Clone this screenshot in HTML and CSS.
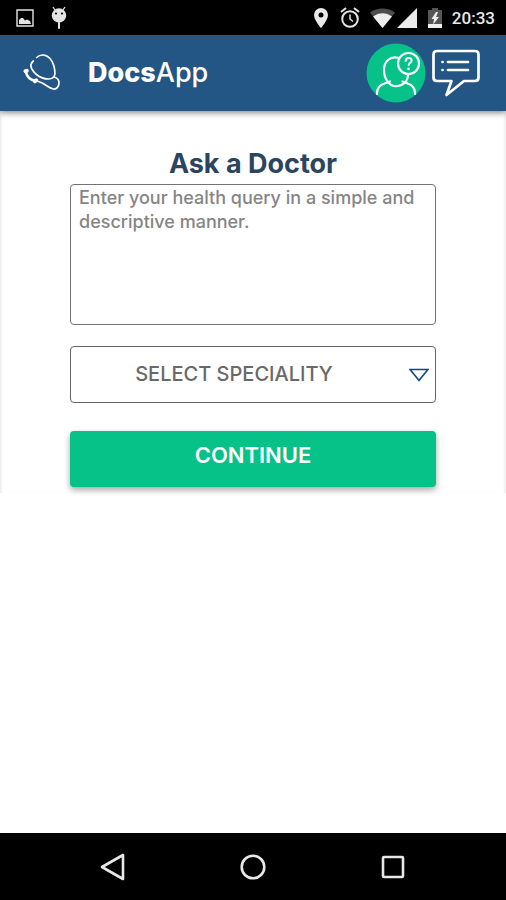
FILE: index.html
```html
<!DOCTYPE html>
<html lang="en">
<head>
<meta charset="utf-8">
<meta name="viewport" content="width=device-width, initial-scale=1">
<title>DocsApp</title>
<link rel="stylesheet" href="styles.css">
</head>
<body>
<div class="status">
  <div class="status-group status-left">
    <svg width="18" height="18" viewBox="0 0 18 18"><path d="M1 1h16v16H1z" fill="none" stroke="#e4e4e4" stroke-width="1.4"/><path d="M3 15v-4l2-2 2 0L9 11.500l2-1 3 1.500 1 3z" fill="#e4e4e4"/></svg>
    <svg width="16" height="24" viewBox="0 0 16 24"><path d="M4 4 2 1M12 4l2-3" stroke="#e4e4e4" stroke-width="1.300"/><circle cx="8" cy="9.500" r="7.200" fill="#e4e4e4"/><circle cx="5" cy="7.500" r="1.100"/><circle cx="11" cy="7.500" r="1.100"/><path d="M8 17v5" stroke="#e4e4e4" stroke-width="2" stroke-linecap="round"/></svg>
  </div>
  <div class="status-group">
    <svg width="16" height="22" viewBox="0 0 16 22"><path fill-rule="evenodd" d="M8 1a7 7 0 0 0-7 7c0 5 7 13 7 13s7-8 7-13a7 7 0 0 0-7-7zm0 4.500a2.500 2.500 0 1 1 0 5 2.500 2.500 0 0 1 0-5z" fill="#e8e8e8"/></svg>
    <svg class="alarm" width="20" height="22" viewBox="0 0 20 22" fill="none" stroke="#e4e4e4" stroke-width="2"><circle cx="10" cy="12" r="7.800"/><path d="M1 5l5-4M19 5l-5-4"/><path d="M10 7.500V12l3 2.500" stroke-width="1.500"/></svg>
    <svg class="wifi" width="25" height="20" viewBox="0 0 25 20"><path d="M0 4.500C7-1 18-1 25 4.500L12.500 20z" fill="#4d4d4d"/><path d="M3 8.500c6-4.500 13-4.500 19 0L12.500 20z" fill="#eee"/></svg>
    <svg class="signal" width="20" height="20" viewBox="0 0 20 20"><path d="M20 0v20H0z" fill="#eaeaea"/></svg>
    <svg class="battery" width="14" height="20" viewBox="0 0 14 20"><path d="M4 0h6v2h4v18H0V2h4z" fill="#555"/><path d="M0 16h14v4H0z" fill="#eee"/><path d="M8 4 3.500 11H6l-.8 5.500L11 9H8l2-5z" fill="#eee"/></svg>
    <time>20:33</time>
  </div>
</div>
<header class="header">
  <svg class="logo" width="37" height="38" viewBox="0 0 37 38" fill="none" stroke="#fff" stroke-width="1.700" stroke-linecap="round" stroke-linejoin="round"><path d="M13.700 3.500C17 0 23 0 27 4.500c3.500 4 4.800 10 5 15-.5 4-3 5.500-6.500 5.500-5 0-9-2-12-4.500C9.500 17 7.500 13.500 8 10.500q.6-2 2.300-3.500"/><path d="M31 23c3.500 1 5.200 3 5 6-.3 4-2.500 6.500-5.500 6-5-.5-8-5.500-15-7.500"/><path d="M3 18.500C4 23 8 26.500 12.500 26.500" stroke-width="2.600"/><path d="M2.500 17.200l1.200-.4M12 27.200l1.200-.9" stroke-width="4"/></svg>
  <h1 class="brand"><b>Docs</b>App</h1>
  <button class="icon-button ask" aria-label="Ask a doctor">
    <svg width="60" height="60" viewBox="0 0 60 60" fill="none" stroke="#fff" stroke-width="2.200" stroke-linecap="round"><circle cx="30" cy="30" r="29.500" fill="#06c188" stroke="none"/><path d="M32 14.700c-8-2-14 4-14 12 0 9 5 16.500 12 16.500s12-5 12-12"/><path d="M11 51c0-8 4-9.500 13-12.500M49 51c0-8-4-9.500-12.500-12.500"/><circle cx="42.500" cy="20.500" r="10.500"/><path d="M39.700 18c0-4 6-4 6-.5 0 2-3 2.500-3 4.500" stroke-width="2"/><path d="M42.500 25.800v.1" stroke-width="2.500"/></svg>
  </button>
  <button class="icon-button chat" aria-label="Messages">
    <svg width="48" height="48" viewBox="0 0 48 48" fill="none" stroke="#fff" stroke-width="2.700" stroke-linejoin="round" stroke-linecap="round"><path d="M5 2h38q3.500 0 3.500 3.500v23q0 3.500-3.500 3.500H32L14.500 46l5-14H5q-3.500 0-3.500-3.500v-23Q1.500 2 5 2z"/><path d="M16 13h20M16 21h20M10.500 13h.1M10.500 21h.1"/></svg>
  </button>
</header>
<main class="page">
  <form class="form">
    <h2 class="title"><label for="query">Ask a Doctor</label></h2>
    <textarea class="query" id="query" placeholder="Enter your health query in a simple and descriptive manner."></textarea>
    <div class="picker">
      <select class="speciality" aria-label="Select speciality"><option>SELECT SPECIALITY</option></select>
      <svg class="arrow" width="20" height="14" viewBox="0 0 20 14"><path d="M1 1.500h18L10 12.500z" fill="none" stroke="#134a83" stroke-width="1.700"/></svg>
    </div>
    <button class="continue" type="button">CONTINUE</button>
  </form>
</main>
<nav class="navbar" aria-label="System">
  <button class="nav-button" aria-label="Back"><svg width="28" height="28" viewBox="0 0 28 28"><path d="M3 14 24 2v24z"/></svg></button>
  <button class="nav-button" aria-label="Home"><svg width="28" height="28" viewBox="0 0 28 28"><circle cx="14" cy="14" r="11.300"/></svg></button>
  <button class="nav-button" aria-label="Recent apps"><svg width="28" height="28" viewBox="0 0 28 28"><rect x="4" y="4" width="20" height="20" rx="1"/></svg></button>
</nav>
</body>
</html>
```
FILE: styles.css
```css
* { box-sizing: border-box; }
body {
  margin: 0;
  min-height: 100vh;
  display: flex;
  flex-direction: column;
  background: #fff;
  font-family: Inter, "Liberation Sans", sans-serif;
}
svg { display: block; flex: none; }
button { padding: 0; border: 0; background: none; }
.status {
  display: flex;
  justify-content: space-between;
  align-items: center;
  height: 35px;
  padding: 0 11px 0 16px;
  background: #000;
}
.status-group { display: flex; align-items: center; }
.status-left { gap: 17px; }
.status time {
  margin-left: 10px;
  color: #e8e8e8;
  font: 500 17px/24px Roboto, sans-serif;
}
.alarm { margin-left: 11px; }
.wifi { margin-left: 10px; }
.signal { margin-left: 2px; }
.battery { margin-left: 11px; }
.header {
  position: relative;
  display: flex;
  align-items: center;
  height: 76px;
  padding: 0 26px 0 23px;
  background: #235684;
  box-shadow: 0 2px 6px rgba(0, 0, 0, .45);
}
.brand {
  flex: 1;
  margin: 0 0 0 28px;
  color: #fff;
  font-size: 27px;
  line-height: 32px;
  font-weight: 500;
}
.brand b { font-weight: 800; }
.chat { margin-left: 6px; }
.page { flex: 1; }
.form {
  display: flex;
  flex-direction: column;
  padding: 37px 70px 6px;
  box-shadow: inset 3px 0 3px -2px #e5e5e5, inset -3px 0 3px -2px #e5e5e5;
}
.title {
  margin: 0 0 4px;
  color: #2b455f;
  font-size: 27px;
  line-height: 32px;
  font-weight: 700;
  text-align: center;
}
.query {
  display: block;
  width: 100%;
  height: 141px;
  padding: 1px 8px;
  border: 1px solid #737373;
  border-radius: 4px;
  background: #fff;
  resize: none;
  font: 500 18px/24px Inter, "Liberation Sans", sans-serif;
}
.query::placeholder { color: #858585; opacity: 1; }
.picker { display: grid; align-items: center; margin: 21px 0 28px; }
.speciality, .arrow { grid-area: 1 / 1; }
.speciality {
  width: 100%;
  height: 57px;
  padding: 0 38px 2px 0;
  border: 1px solid #666;
  border-radius: 4px;
  appearance: none;
  background: #fff;
  color: #696969;
  font: 500 20px/28px Inter, "Liberation Sans", sans-serif;
  text-align: center;
  text-align-last: center;
}
.arrow { justify-self: end; margin-right: 7px; pointer-events: none; }
.continue {
  height: 56px;
  padding-bottom: 8px;
  border-radius: 4px;
  background: #06c188;
  box-shadow: 0 3px 6px rgba(0, 0, 0, .35);
  color: #fff;
  font: 600 22px/28px Inter, "Liberation Sans", sans-serif;
}
.navbar {
  display: flex;
  justify-content: center;
  gap: 112px;
  height: 67px;
  background: #000;
}
.nav-button svg { fill: none; stroke: #e8e8e8; stroke-width: 2.6px; stroke-linejoin: round; }
```
